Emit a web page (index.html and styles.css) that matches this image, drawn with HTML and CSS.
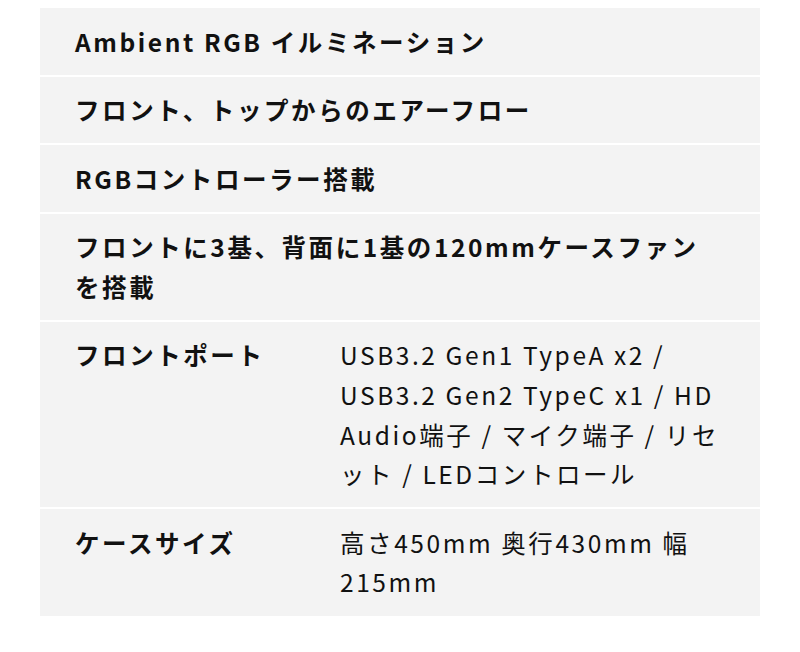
FILE: index.html
```html
<!DOCTYPE html>
<html lang="ja">
<head>
<meta charset="utf-8">
<link rel="stylesheet" href="styles.css">
</head>
<body>
<table class="spec">
  <colgroup>
    <col class="col-label">
    <col class="col-value">
  </colgroup>
  <tbody>
    <tr><th colspan="2">Ambient RGB イルミネーション</th></tr>
    <tr><th colspan="2">フロント、トップからのエアーフロー</th></tr>
    <tr><th colspan="2">RGBコントローラー搭載</th></tr>
    <tr><th colspan="2">フロントに3基、背面に1基の120mmケースファンを搭載</th></tr>
    <tr><th>フロントポート</th><td>USB3.2 Gen1 TypeA x2 / USB3.2 Gen2 TypeC x1 / HD Audio端子 / マイク端子 / リセット / LEDコントロール</td></tr>
    <tr><th>ケースサイズ</th><td>高さ450mm 奥行430mm 幅215mm</td></tr>
  </tbody>
</table>
</body>
</html>
```

FILE: styles.css
```css
html, body {
  margin: 0;
  padding: 0;
  background: #fff;
}
body {
  padding: 8px 40px;
  font-family: "Noto Sans CJK JP", "Noto Sans", sans-serif;
  color: #111;
}
.spec {
  width: 720px;
  border-collapse: collapse;
  background: #f3f3f3;
  table-layout: fixed;
}
.col-label {
  width: 265px;
}
.spec tr {
  border-bottom: 2px solid #fff;
}
.spec tr:last-child {
  border-bottom: none;
}
.spec th, .spec td {
  text-align: left;
  vertical-align: top;
  font-size: 24.5px;
  line-height: 39.6px;
  letter-spacing: 0.105em;
  padding: 13.5px 35px;
}
.spec th {
  font-weight: 700;
}
.spec td {
  font-weight: 400;
}
```
